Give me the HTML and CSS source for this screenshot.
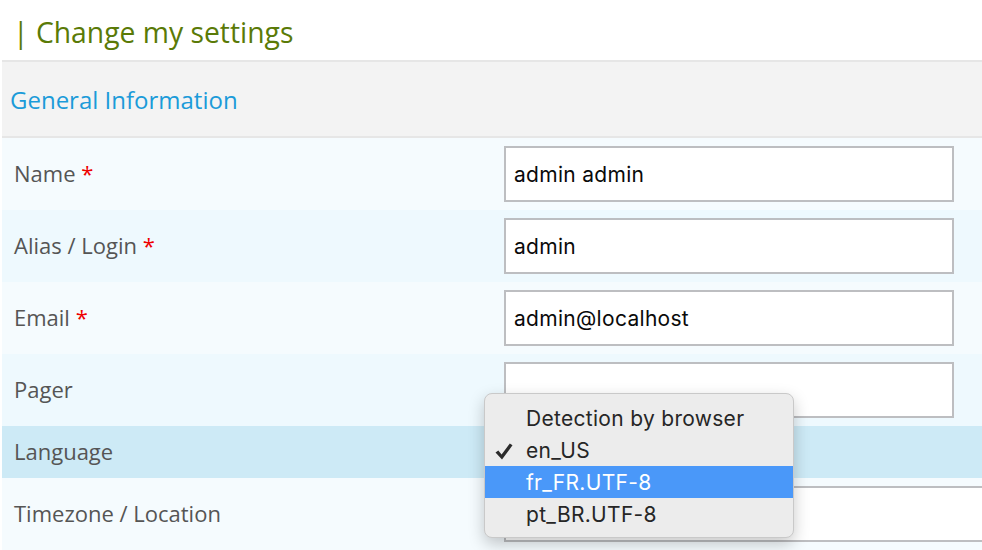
FILE: index.html
```html
<!DOCTYPE html>
<html>
<head>
<meta charset="utf-8">
<link rel="stylesheet" href="styles.css">
</head>
<body>
<div class="page">
  <h1 class="title">| Change my settings</h1>
  <div class="panel">
    <div class="panel-head">General Information</div>
    <div class="row odd">
      <div class="label">Name <span class="req">*</span></div>
      <div class="field"><div class="input">admin admin</div></div>
    </div>
    <div class="row even">
      <div class="label">Alias / Login <span class="req">*</span></div>
      <div class="field"><div class="input">admin</div></div>
    </div>
    <div class="row odd">
      <div class="label">Email <span class="req">*</span></div>
      <div class="field"><div class="input">admin@localhost</div></div>
    </div>
    <div class="row even">
      <div class="label">Pager</div>
      <div class="field"><div class="input"></div></div>
    </div>
    <div class="row lang">
      <div class="label">Language</div>
      <div class="field">
        <div class="menu">
          <div class="item">Detection by browser</div>
          <div class="item"><svg class="check" width="18" height="17" viewBox="0 0 18 17"><path d="M0.5 9.5 L3.3 7.6 L6.6 11.4 L14.8 0.5 L17.5 2.3 L7 16.5 Z" fill="#2b2b2b"/></svg>en_US</div>
          <div class="item sel">fr_FR.UTF-8</div>
          <div class="item">pt_BR.UTF-8</div>
        </div>
      </div>
    </div>
    <div class="row odd">
      <div class="label">Timezone / Location</div>
      <div class="field"><div class="input wide"></div></div>
    </div>
  </div>
</div>
</body>
</html>
```
FILE: styles.css
```css
html, body {
  margin: 0;
  padding: 0;
  background: #ffffff;
  overflow: hidden;
}
.page {
  width: 982px;
  height: 550px;
  overflow: hidden;
}
.title {
  margin: 0;
  height: 60px;
  padding: 13px 0 0 13px;
  box-sizing: border-box;
  font-family: "Open Sans", sans-serif;
  font-weight: 400;
  font-size: 28.3px;
  line-height: 38px;
  color: #5a7a07;
}
.panel {
  margin-left: 2px;
}
.panel-head {
  height: 74px;
  border-top: 2px solid #e6e6e6;
  border-bottom: 2px solid #e6e6e6;
  background: #f3f3f3;
  display: flex;
  align-items: center;
  padding-left: 8px;
  font-family: "Open Sans", sans-serif;
  font-size: 24px;
  color: #1b9bd9;
}
.row {
  display: flex;
  align-items: center;
  height: 72px;
}
.row.odd { background: #f5fbfe; }
.row.even { background: #eef9fe; }
.row.lang { background: #cdeaf6; height: 52px; }
.label {
  flex-shrink: 0;
  width: 490px;
  padding-left: 12px;
  padding-bottom: 3px;
  font-family: "Open Sans", sans-serif;
  font-size: 22px;
  color: #555555;
}
.req { color: #ee0000; }
.field {
  position: relative;
  flex: 1;
  min-width: 0;
  height: 100%;
  display: flex;
  align-items: center;
}
.input {
  flex-shrink: 0;
  width: 450px;
  height: 56px;
  box-sizing: border-box;
  border: 2px solid #bdbec1;
  background: #ffffff;
  padding-left: 8px;
  display: flex;
  align-items: center;
  font-family: "Inter", "Liberation Sans", sans-serif;
  font-size: 21px;
  letter-spacing: 0.3px;
  color: #0a0a0a;
}
.input.wide { width: 520px; }
.menu {
  position: absolute;
  left: -20px;
  top: -33px;
  width: 310px;
  height: 145px;
  box-sizing: border-box;
  padding-top: 8px;
  background: #ececec;
  border: 1px solid #c9c9c9;
  border-radius: 8px;
  box-shadow: 0 6px 16px rgba(0,0,0,0.22);
  z-index: 5;
  font-family: "Inter", "Liberation Sans", sans-serif;
  font-size: 21px;
  letter-spacing: 0.3px;
  color: #262626;
}
.item {
  position: relative;
  height: 32px;
  line-height: 33px;
  padding-left: 41px;
}
.item.sel {
  background: #4a98f9;
  color: #ffffff;
}
.check {
  position: absolute;
  left: 10px;
  top: 9px;
}
```
